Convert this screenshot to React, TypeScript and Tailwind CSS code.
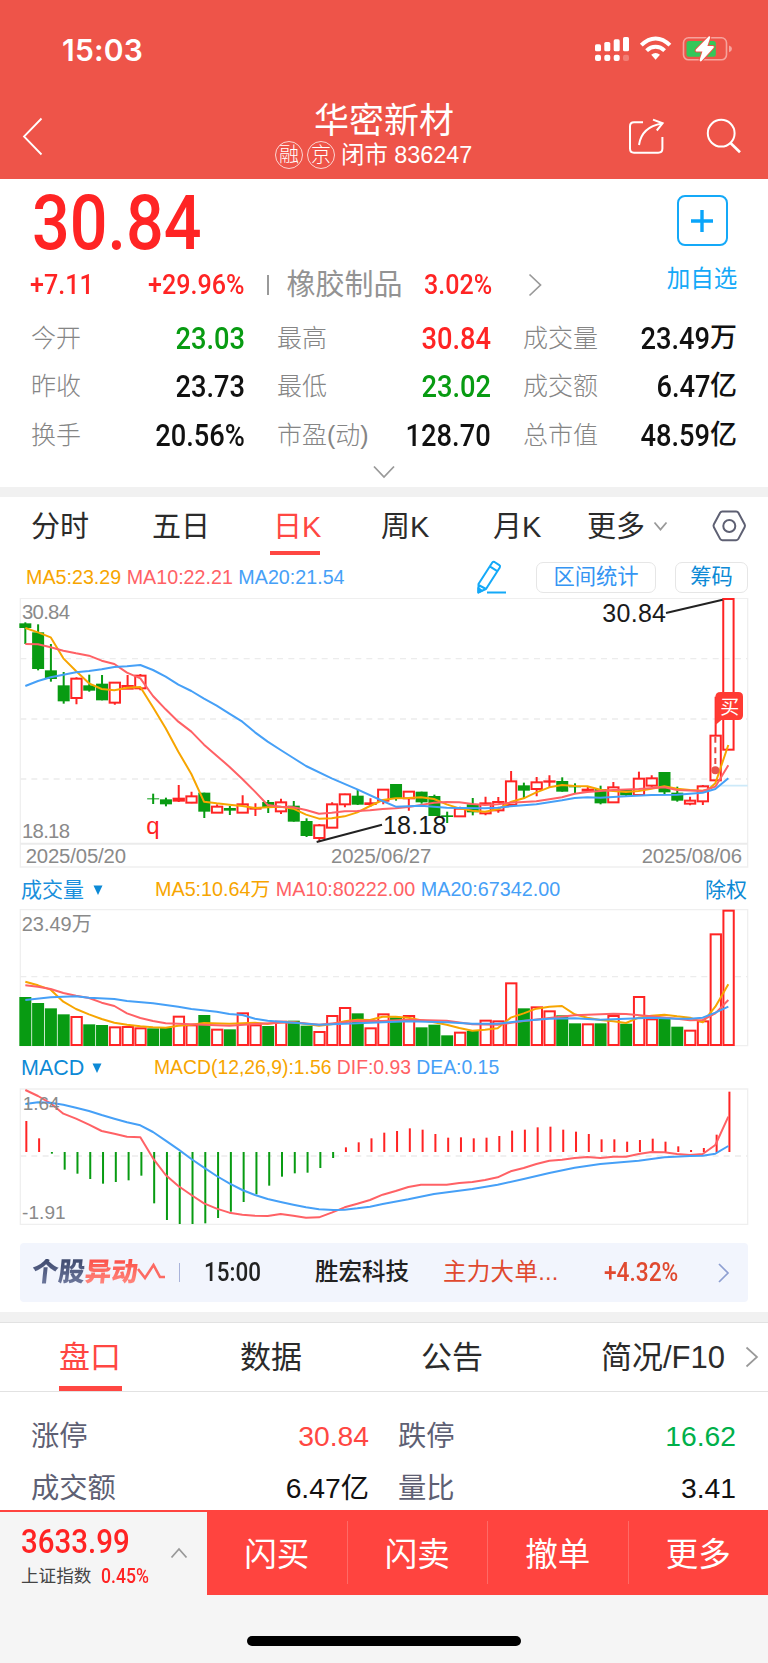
import React from "react";
import clsx from "clsx";

type Candle = [dir: "u" | "d", high: number, low: number, top: number, bottom: number];
type Bar = ["u" | "d", number];

const RED = "#ff2424";
const GREEN = "#089b12";
const ORANGE = "#f7a500";
const PINK = "#ff6165";
const BLUE = "#46a0f7";

// Chart units are thirds of a pixel, one trading day every STEP units.
const STEP = 38.35;
const dayX = (i: number) => 76 + i * STEP;

const candles: Candle[] = [
  ["d", 97, 162, 100, 114], ["d", 103, 241, 127, 237], ["d", 162, 275, 241, 267], ["d", 246, 341, 286, 334],
  ["u", 262, 343, 266, 324], ["d", 254, 305, 286, 302], ["d", 255, 331, 281, 331], ["u", 277, 344, 278, 338],
  ["u", 255, 297, 288, 296], ["u", 252, 301, 257, 295], ["d", 611, 642, 625, 628], ["d", 623, 649, 628, 643],
  ["u", 585, 636, 626, 632], ["u", 605, 640, 619, 638], ["d", 608, 684, 608, 665], ["u", 643, 668, 650, 668],
  ["d", 648, 675, 654, 662], ["u", 616, 669, 643, 668], ["u", 640, 678, 655, 656], ["d", 630, 669, 636, 654],
  ["u", 626, 672, 637, 664], ["d", 633, 695, 647, 695], ["d", 685, 741, 693, 738], ["u", 702, 756, 706, 744],
  ["u", 637, 714, 643, 713], ["u", 611, 652, 613, 643], ["d", 598, 645, 617, 644], ["u", 625, 650, 640, 642],
  ["u", 597, 643, 599, 632], ["d", 582, 632, 582, 627], ["u", 603, 662, 605, 625], ["d", 605, 641, 605, 637],
  ["d", 614, 678, 618, 678], ["d", 665, 699, 676, 681], ["u", 650, 681, 656, 679], ["d", 624, 676, 643, 667],
  ["u", 620, 676, 640, 670], ["u", 621, 668, 636, 661], ["u", 543, 645, 574, 645], ["d", 578, 625, 586, 602],
  ["u", 561, 619, 577, 597], ["u", 556, 592, 574, 575], ["d", 562, 605, 573, 605], ["d", 580, 610, 589, 592],
  ["u", 590, 604, 599, 602], ["d", 587, 643, 597, 640], ["u", 576, 638, 592, 637], ["d", 597, 618, 600, 616],
  ["u", 545, 615, 566, 615], ["u", 556, 590, 565, 587], ["d", 546, 612, 546, 607], ["d", 590, 635, 608, 632],
  ["u", 620, 646, 632, 641], ["u", 585, 645, 589, 634], ["u", 320, 572, 437, 571], ["u", 27, 480, 27, 479],
];

const priceMa5 =
  "76,114 114,127 152,142 190,205 228,243 267,280 305,297 343,301 381,293 421,291 459,352 497,415 535,485 574,552 612,635 650,640 688,644 727,648 765,654 803,652 842,650 880,656 918,674 957,686 995,685 1034,679 1072,667 1110,648 1148,630 1187,625 1225,624 1263,622 1302,627 1340,643 1378,655 1417,662 1455,665 1493,658 1532,636 1571,625 1609,607 1648,592 1686,585 1724,588 1762,589 1801,599 1840,603 1878,606 1916,603 1954,596 1993,589 2031,596 2070,600 2108,602 2124,599 2146,580 2185,465";
const priceMa10 =
  "76,162 114,163 152,172 190,182 228,190 267,197 305,212 343,222 381,248 421,265 459,318 497,358 535,395 574,425 612,464 650,497 688,530 727,567 765,605 803,645 842,650 880,652 918,660 957,671 995,668 1034,664 1072,663 1110,661 1148,657 1187,655 1225,651 1263,645 1302,638 1340,636 1378,637 1417,642 1455,645 1493,643 1532,638 1609,634 1648,628 1686,622 1724,611 1762,606 1840,600 1916,597 1993,592 2031,600 2108,603 2146,590 2185,526";
const priceMa20 =
  "76,288 114,273 152,262 190,254 228,247 267,243 305,238 343,231 381,229 421,225 459,240 497,260 535,284 574,303 612,326 650,347 688,371 727,395 765,427 803,455 842,480 880,504 918,528 995,565 1072,598 1148,633 1187,650 1263,647 1340,653 1378,654 1455,655 1493,653 1532,649 1609,643 1686,631 1724,624 1762,622 1801,623 1878,619 1954,615 2031,614 2108,608 2146,597 2185,565";

const volumes: Bar[] = [
  ["d", 381], ["d", 399], ["d", 415], ["d", 433], ["u", 441], ["d", 463], ["d", 465], ["u", 472],
  ["u", 471], ["u", 475], ["d", 475], ["d", 473], ["u", 440], ["u", 466], ["d", 435], ["u", 479],
  ["d", 478], ["u", 430], ["u", 466], ["d", 468], ["u", 455], ["d", 452], ["d", 467], ["u", 486],
  ["u", 438], ["u", 414], ["d", 430], ["u", 475], ["u", 433], ["d", 442], ["u", 438], ["d", 472],
  ["d", 464], ["d", 496], ["u", 488], ["d", 483], ["u", 452], ["u", 454], ["u", 340], ["d", 415],
  ["u", 412], ["u", 424], ["d", 436], ["d", 460], ["u", 463], ["d", 460], ["u", 438], ["d", 461],
  ["u", 381], ["u", 448], ["d", 447], ["d", 470], ["u", 482], ["u", 454], ["u", 193], ["u", 122],
];

const volMa5 =
  "76,335 114,346 152,359 190,395 228,417 267,433 305,447 343,458 381,464 421,469 459,472 497,473 535,467 574,464 612,459 688,461 765,458 803,462 842,456 880,457 957,467 995,463 1034,454 1072,449 1110,450 1148,440 1187,440 1225,443 1263,451 1302,457 1340,464 1378,474 1417,482 1455,479 1493,475 1532,443 1571,430 1609,416 1648,410 1686,408 1724,433 1762,443 1801,450 1840,454 1878,459 1916,443 1954,437 1993,434 2031,439 2070,443 2108,457 2146,410 2185,343";
const volMa10 =
  "76,346 114,350 152,357 190,369 228,377 267,384 305,398 343,408 381,430 421,444 459,453 497,460 535,461 612,464 688,467 765,462 842,458 880,457 957,464 1034,457 1072,452 1148,453 1225,449 1340,452 1417,463 1493,464 1571,453 1648,444 1724,436 1801,433 1840,431 1878,432 1954,439 2031,446 2070,451 2108,450 2146,430 2185,390";
const volMa20 =
  "76,390 152,382 228,379 267,383 343,387 381,393 459,400 535,410 574,417 650,425 688,432 727,435 765,446 803,452 880,458 957,464 1034,461 1110,458 1225,454 1340,457 1417,461 1493,461 1571,452 1648,446 1724,445 1801,449 1878,446 1954,443 2031,446 2070,446 2108,443 2146,428 2185,410";

const macd = [
  753, 805, 851, 899, 911, 927, 941, 936, 931, 917, 1000, 1050, 1062, 1062, 1060, 1044, 1025, 996, 973,
  947, 920, 910, 908, 894, 864, 832, 817, 805, 788, 783, 775, 779, 792, 803, 802, 805, 803, 798, 782,
  779, 772, 770, 779, 785, 792, 808, 808, 815, 810, 806, 815, 829, 840, 834, 794, 665,
];
const MACD_ZERO = 846;

const dif =
  "76,660 114,678 152,700 190,731 228,746 267,764 305,783 343,791 381,800 421,802 459,865 497,915 535,948 574,975 612,1000 650,1016 688,1028 727,1034 765,1037 803,1038 842,1032 880,1037 918,1043 957,1042 995,1028 1034,1012 1072,1001 1110,990 1148,974 1187,963 1225,951 1263,944 1340,944 1378,939 1417,936 1455,930 1493,922 1532,904 1571,894 1609,882 1648,872 1686,869 1724,864 1762,861 1801,864 1840,860 1878,860 1916,852 1954,846 1993,847 2031,852 2070,855 2108,852 2146,825 2185,740";
const dea =
  "76,702 114,697 152,698 190,704 228,713 267,723 305,735 343,746 381,757 421,766 459,786 497,812 535,838 574,867 612,893 650,918 688,940 727,960 765,975 803,987 842,996 880,1004 918,1012 957,1018 1000,1020 1034,1019 1072,1015 1110,1010 1148,1002 1225,988 1302,972 1417,957 1493,944 1571,927 1648,909 1724,893 1801,882 1916,872 1993,862 2070,858 2108,857 2146,851 2185,828";

const stats = [
  [
    { label: "今开", value: "23.03", color: "text-[#089b12]" },
    { label: "最高", value: "30.84", color: "text-[#ff2424]" },
    { label: "成交量", value: "23.49", unit: "万", color: "text-[#111]" },
  ],
  [
    { label: "昨收", value: "23.73", color: "text-[#111]" },
    { label: "最低", value: "23.02", color: "text-[#089b12]" },
    { label: "成交额", value: "6.47", unit: "亿", color: "text-[#111]" },
  ],
  [
    { label: "换手", value: "20.56%", color: "text-[#111]" },
    { label: "市盈(动)", value: "128.70", color: "text-[#111]" },
    { label: "总市值", value: "48.59", unit: "亿", color: "text-[#111]" },
  ],
];

// Condensed figures used for quotes
const Num = ({ children, className }: { children: React.ReactNode; className?: string }) => (
  <span
    className={clsx(
      "inline-block whitespace-nowrap scale-x-[0.88] font-['Roboto','Noto_Sans_CJK_SC',sans-serif] font-medium",
      className
    )}
  >
    {children}
  </span>
);

const Line = ({ points, color }: { points: string; color: string }) => (
  <polyline points={points} fill="none" stroke={color} strokeWidth="6" strokeLinejoin="round" />
);

const Dash = ({ y }: { y: number }) => (
  <line x1="61" x2="2243" y1={y} y2={y} stroke="#ececec" strokeWidth="4" strokeDasharray="18 15 18 16" />
);

const chartFont = "Liberation Sans, Noto Sans CJK SC, sans-serif";

const StatusBar = () => (
  <div className="flex h-[98px] items-center pl-[62px] pr-[36px]">
    <span className="mt-[2px] font-['Inter',sans-serif] text-[30px] font-semibold leading-none tracking-[0.2px]">15:03</span>
    <svg className="ml-auto" width="139" height="28" viewBox="593 35 139 28">
      <g fill="#fff">
        <rect x="595" y="44.3" width="6" height="7" rx="1.6" />
        <rect x="604.3" y="42" width="6" height="9.3" rx="1.6" />
        <rect x="613.7" y="39.3" width="6" height="12" rx="1.6" />
        <rect x="623" y="37" width="6" height="14.3" rx="1.6" />
        <rect x="595" y="54.7" width="6" height="6.3" rx="2" />
        <rect x="604.3" y="54.7" width="6" height="6.3" rx="2" />
        <rect x="613.7" y="54.7" width="6" height="6.3" rx="2" />
        <rect x="623" y="54.7" width="6" height="6.3" rx="2" opacity=".25" />
        <path d="M651.2 54.8Q655.6 51.3 660 54.8L655.6 59.8Z" />
      </g>
      <g fill="none" stroke="#fff" strokeWidth="4">
        <path d="M641.3 45.2Q648 38.4 655.6 38.4Q663.2 38.4 669.9 45.2" />
        <path d="M646.6 50.6Q650.6 46.7 655.6 46.7Q660.6 46.7 664.6 50.6" />
      </g>
      <rect x="683.5" y="37.8" width="43" height="22" rx="5" fill="none" stroke="#f6a39d" strokeWidth="1.6" />
      <path d="M729 45.5Q732 46.5 732 48.8Q732 51.2 729 52.2Z" fill="#f6a39d" />
      <rect x="686.5" y="41" width="29.3" height="15.8" rx="2.5" fill="#33c759" />
      <path
        d="M708.6 36.6L696 49.6Q695 51.6 697 51.6H702.4L699.6 60Q699.8 62.2 701.6 61L713.4 48Q714.6 46 712.6 46H707.4L710.2 37.6Q710.2 35.6 708.6 36.6Z"
        fill="#fff"
        stroke="#ee5449"
        strokeWidth="2"
        paintOrder="stroke"
      />
    </svg>
  </div>
);

const Header = () => (
  <header className="h-[179px] bg-[#ee5449] text-white">
    <StatusBar />
    <div className="flex h-[80px]">
      <svg className="ml-[22px] mt-[19px]" width="22" height="39" fill="none" stroke="#fff" strokeWidth="1.8">
        <path d="M19.5 1.5L2 19.5L19.5 37.5" />
      </svg>
      <div className="ml-[231px] w-[218px]">
        <h1 className="ml-[39px] mt-[4px] text-[35px] font-normal leading-[38px]">华密新材</h1>
        <div className="mt-[1px] flex items-center whitespace-nowrap text-[23.4px] leading-[28px]">
          <span className="flex h-[28px] w-[28px] items-center justify-center rounded-full border border-white/75 text-[20px] font-light leading-none">
            融
          </span>
          <span className="ml-[4px] flex h-[28px] w-[28px] items-center justify-center rounded-full border border-white/75 text-[20px] font-light leading-none">
            京
          </span>
          <span className="ml-[6px]">闭市 836247</span>
        </div>
      </div>
      <svg className="ml-[135px] mt-[18px]" width="115" height="42" viewBox="628 116 115 42" fill="none" stroke="#fff" strokeWidth="2">
        <path d="M643 122.3H634Q630 122.3 630 126.3V148.5Q630 152.7 634 152.7H658.2Q662.4 152.7 662.4 148.5V137" />
        <path d="M639 145Q641.5 127 662 123.5M653 119.6L662.6 123.3L656.8 130.5" />
        <circle cx="721.2" cy="133.2" r="13.4" />
        <path d="M730.5 143L740 152.3" strokeWidth="2.6" />
      </svg>
    </div>
  </header>
);

const Quote = () => (
  <section className="h-[308px] pt-[16px]">
    <div className="flex h-[121px] text-[#ff2424]">
      <div className="w-[620px]">
        <Num className="ml-[32px] block h-[73px] w-[200px] origin-left text-[75.5px] leading-[57px]">30.84</Num>
        <div className="flex h-[34px] items-center text-[28.5px] leading-none">
          <div className="ml-[30px] w-[118px]">
            <Num className="origin-left">+7.11</Num>
          </div>
          <div className="w-[119px]">
            <Num className="origin-left">+29.96%</Num>
          </div>
          <div className="h-[20px] w-[1.5px] bg-[#999]" />
          <div className="ml-[18px] w-[137px] whitespace-nowrap text-[29px] text-[#939393]">橡胶制品</div>
          <Num className="origin-left">3.02%</Num>
          <svg className="ml-[27px]" width="15" height="24" fill="none" stroke="#999" strokeWidth="1.7">
            <path d="M1.5 1.5L12.5 12L1.5 22.5" />
          </svg>
        </div>
      </div>
      <div className="ml-[45px] w-[74px] text-center text-[#14a9f8]">
        <div className="mx-auto flex h-[51px] w-[51px] items-center justify-center rounded-[8px] border-2 border-[#14a9f8]">
          <svg width="22" height="22" stroke="#0aa5fa" strokeWidth="3.4">
            <path d="M11 0V22M0 11H22" />
          </svg>
        </div>
        <div className="mt-[21px] text-[23.5px] leading-[24px]">加自选</div>
      </div>
    </div>
    <div className="-mt-[2px] pl-[31px]">
      {stats.map((row) => (
        <div key={row[0].label} className="flex h-[48.5px] gap-[32px]">
          {row.map((s) => (
            <div key={s.label} className="flex w-[214px] items-center justify-between whitespace-nowrap leading-none">
              <span className="text-[25px] font-light text-[#858585]">{s.label}</span>
              <div className={clsx("flex items-center", s.color)}>
                <Num className="origin-right text-[31px]">{s.value}</Num>
                {s.unit && <span className="text-[27px] font-medium">{s.unit}</span>}
              </div>
            </div>
          ))}
        </div>
      ))}
    </div>
    <svg className="mx-auto mt-[5px]" width="24" height="15" fill="none" stroke="#999" strokeWidth="1.8">
      <path d="M2 1.5L12 12L22 1.5" />
    </svg>
  </section>
);

const periods = [
  { name: "分时", cell: "w-[121px]" },
  { name: "五日", cell: "w-[121px]" },
  { name: "日K", cell: "w-[108px]" },
  { name: "周K", cell: "w-[112px]" },
  { name: "月K", cell: "w-[94px]" },
  { name: "更多", cell: "w-[66px]" },
];

const PeriodTabs = () => (
  <nav className="flex h-[60px] items-start pl-[31px] text-[29px] text-[#2b2b2b]">
    {periods.map(({ name, cell }) => (
      <div key={name} className={clsx("whitespace-nowrap pt-[13px] leading-[34px]", cell, name === "日K" && "text-[#ff4742]")}>
        {name}
        {name === "日K" && <div className="-ml-[3px] mt-[6.5px] h-[4.5px] w-[50px] bg-[#ff4742]" />}
      </div>
    ))}
    <svg className="mt-[24px]" width="15" height="11" fill="none" stroke="#999" strokeWidth="1.8">
      <path d="M1.5 1.5L7.5 8.5L13.5 1.5" />
    </svg>
    <svg className="ml-[43px] mt-[12px]" width="36" height="34" viewBox="711 509 36 34" fill="none" stroke="#5e6073" strokeWidth="2">
      <path d="M722.3 511.5H736.2Q737.7 511.5 738.4 512.8L744.6 524.3Q745.4 525.8 744.6 527.3L738.4 538.9Q737.7 540.2 736.2 540.2H722.3Q720.8 540.2 720.1 538.9L713.9 527.3Q713.1 525.8 713.9 524.3L720.1 512.8Q720.8 511.5 722.3 511.5Z" />
      <circle cx="729.3" cy="526" r="6" />
    </svg>
  </nav>
);

const PriceChart = () => (
  <>
    <div className="flex h-[41px] items-center pl-[26px] text-[19.7px]">
      <div className="w-[450px] whitespace-nowrap pt-px">
        <span className="text-[#f7a500]">MA5:23.29</span> <span className="text-[#ff6165]">MA10:22.21</span>{" "}
        <span className="text-[#46a0f7]">MA20:21.54</span>
      </div>
      <svg width="32" height="36" viewBox="476 559 32 36" fill="none" stroke="#14a9f8" strokeWidth="2" strokeLinejoin="round">
        <path d="M478.5 583L492.3 561.5Q493.2 560.3 494.5 561L499.3 564.2Q500.6 565.1 499.8 566.4L486 588L478.5 591.3ZM489.8 565.3L497.6 570.3M478.5 584L486 588M487 591.5H506" />
        <path d="M478.3 587L482 589.7L478.3 591.6Z" fill="#14a9f8" />
      </svg>
      <div className="ml-[28px] flex h-[31px] w-[120px] items-center justify-center rounded-[7px] border border-[#e6e6e6] text-[21.3px] leading-none text-[#3595f3]">
        区间统计
      </div>
      <div className="ml-[19px] flex h-[31px] w-[73px] items-center justify-center rounded-[7px] border border-[#e6e6e6] text-[21.3px] leading-none text-[#0d8ad6]">
        筹码
      </div>
    </div>
    <svg className="block" width="768" height="271" viewBox="0 24 2304 813" fontFamily={chartFont}>
      <g fill="none" stroke="#efefef" strokeWidth="4">
        <path d="M61 25H2243V831H61Z" />
        <path d="M61 761H2243" stroke="#ebebeb" strokeWidth="6" />
      </g>
      <Dash y={206} />
      <Dash y={387} />
      <Dash y={567} />
      <path d="M2100 587H2243" stroke="#cdeaf9" strokeWidth="5" />
      <g fontSize="61" fill="#8a8a8a">
        <text x="66" y="88" textLength="144">30.84</text>
        <text x="66" y="743" textLength="144">18.18</text>
        <text x="77" y="820" textLength="301">2025/05/20</text>
        <text x="993" y="820" textLength="301">2025/06/27</text>
        <text x="1925" y="820" textLength="301">2025/08/06</text>
      </g>
      {candles.map(([dir, high, low, top, bottom], i) => {
        const x = dayX(i);
        if (dir === "d")
          return (
            <g key={i} fill={GREEN}>
              <rect x={x - 3} y={high} width="6" height={low - high} />
              <rect x={x - 18} y={top} width="36" height={bottom - top} />
            </g>
          );
        return (
          <g key={i} fill="none" stroke={RED} strokeWidth="6">
            <path d={`M${x} ${high}V${top}M${x} ${bottom}V${low}`} />
            <rect x={x - 15.5} y={top} width="31" height={bottom - top} />
          </g>
        );
      })}
      <Line points={priceMa5} color={ORANGE} />
      <Line points={priceMa10} color={PINK} />
      <Line points={priceMa20} color={BLUE} />
      <path d="M950 756L1146 704M1998 69L2168 29" stroke="#222" strokeWidth="6" />
      <g fontSize="75" fill="#1a1a1a">
        <text x="1149" y="733" textLength="190">18.18</text>
        <text x="1807" y="97" textLength="191">30.84</text>
      </g>
      <text x="439" y="732" fontSize="72" fill={RED}>q</text>
      <path d="M2146 440V540" stroke="#e8453f" strokeWidth="6" strokeDasharray="18 14" />
      <circle cx="2146" cy="541" r="12" fill="#e8534c" />
      <path d="M2146 322Q2146 306 2162 306H2215Q2229 306 2229 320V376Q2229 390 2215 390H2164L2146 406Z" fill="#ff3b33" />
      <text x="2161" y="371" fontSize="57" fill="#fff">买</text>
    </svg>
  </>
);

const VolumeChart = () => (
  <>
    <div className="flex h-[40px] items-center pl-[21px] pt-px text-[19.75px]">
      <span className="w-[72px] text-[21px] text-[#1a8fdc]">成交量</span>
      <svg width="10" height="10" fill="#0d8ad6">
        <path d="M0.5 0.5H9.5L5 10Z" />
      </svg>
      <div className="ml-[52px] w-[550px] whitespace-nowrap">
        <span className="text-[#f7a500]">MA5:10.64万</span> <span className="text-[#ff6165]">MA10:80222.00</span>{" "}
        <span className="text-[#46a0f7]">MA20:67342.00</span>
      </div>
      <span className="text-[21px] text-[#0d8ad6]">除权</span>
    </div>
    <svg className="block" width="768" height="138" viewBox="0 117 2304 414" fontFamily={chartFont}>
      <path d="M61 119H2243V527H61Z" fill="none" stroke="#efefef" strokeWidth="4" />
      <Dash y={320} />
      <text x="65" y="184" fontSize="60" fill="#8a8a8a">23.49万</text>
      {volumes.map(([dir, top], i) =>
        dir === "d" ? (
          <rect key={i} x={dayX(i) - 18} y={top} width="36" height={528 - top} fill={GREEN} />
        ) : (
          <rect key={i} x={dayX(i) - 15} y={top} width="31" height={525 - top} fill="#fff" stroke={RED} strokeWidth="6" />
        )
      )}
      <Line points={volMa5} color={ORANGE} />
      <Line points={volMa10} color={PINK} />
      <Line points={volMa20} color={BLUE} />
    </svg>
  </>
);

const MacdChart = () => (
  <>
    <div className="flex h-[41px] items-center pl-[21px] pt-px text-[19.35px]">
      <span className="w-[71px] text-[21.5px] text-[#0d8ad6]">MACD</span>
      <svg width="10" height="10" fill="#0d8ad6">
        <path d="M0.5 0.5H9.5L5 10Z" />
      </svg>
      <div className="ml-[52px] whitespace-nowrap">
        <span className="text-[#f7a500]">MACD(12,26,9):1.56</span> <span className="text-[#ff6165]">DIF:0.93</span>{" "}
        <span className="text-[#46a0f7]">DEA:0.15</span>
      </div>
    </div>
    <svg className="block" width="768" height="137" viewBox="0 654 2304 411" fontFamily={chartFont}>
      <path d="M61 657H2243V1063H61Z" fill="none" stroke="#efefef" strokeWidth="4" />
      <Dash y={858} />
      {macd.map((v, i) => (
        <rect
          key={i}
          x={dayX(i)}
          y={Math.min(v, MACD_ZERO)}
          width="6"
          height={Math.abs(v - MACD_ZERO)}
          fill={v < MACD_ZERO ? RED : GREEN}
        />
      ))}
      <Line points={dif} color={PINK} />
      <Line points={dea} color={BLUE} />
      <g fontSize="57" fill="#8a8a8a">
        <text x="68" y="720">1.64</text>
        <text x="66" y="1048" textLength="131">-1.91</text>
      </g>
    </svg>
  </>
);

const Movers = () => (
  <div className="mx-[20px] mt-[18px] flex h-[59px] items-center whitespace-nowrap rounded-[4px] bg-[#f2f5fd] text-[23.5px] leading-none text-[#222]">
    <div className="ml-[12px] flex w-[105px] -skew-x-[6deg] text-[26.5px] font-black">
      <span className="bg-linear-to-b from-[#3f4a6e] to-[#717ba0] bg-clip-text text-transparent">个股</span>
      <span className="bg-linear-to-b from-[#fb4f48] to-[#ff8a82] bg-clip-text text-transparent">异动</span>
    </div>
    <svg width="31" height="26" fill="none" stroke="#fc6a63" strokeWidth="2.6">
      <path d="M1 9L8 18L16.500 5L23 17H28" />
    </svg>
    <div className="ml-[11px] h-[19px] w-px bg-[#a9b3da]" />
    <div className="ml-[24px] w-[111px] pt-px text-[25.5px]">
      <Num className="origin-left">15:00</Num>
    </div>
    <div className="w-[128px] pt-px font-medium">胜宏科技</div>
    <div className="w-[161px] pt-px tracking-[0.3px] text-[#e0492f]">主力大单...</div>
    <div className="w-[114px] pt-px text-[25.8px] text-[#e0492f]">
      <Num className="origin-left">+4.32%</Num>
    </div>
    <svg width="12" height="20" fill="none" stroke="#8e9fd2" strokeWidth="1.7">
      <path d="M1 1L10 10L1 19" />
    </svg>
  </div>
);

const InfoTabs = () => (
  <nav className="flex h-[70px] border-y border-[#e2e2e2] text-[31px] leading-[69px] text-[#2b2b2b]">
    <div className="ml-[59px] flex w-[181px] flex-col text-[#ff4742]">
      <span className="h-[63px]">盘口</span>
      <div className="h-[5px] w-[63px] bg-[#ff4742]" />
    </div>
    <div className="w-[181px]">数据</div>
    <div className="w-[180px]">公告</div>
    <div className="w-[144px] whitespace-nowrap">简况/F10</div>
    <svg className="mt-[23px]" width="14" height="22" fill="none" stroke="#999" strokeWidth="1.7">
      <path d="M1.5 1.5L12 11L1.5 20.5" />
    </svg>
  </nav>
);

const details = [
  ["涨停", "30.84", "text-[#ff4742]", "跌停", "16.62", "text-[#00b04a]"],
  ["成交额", "6.47亿", "text-[#111]", "量比", "3.41", "text-[#111]"],
];

const Details = () => (
  <div className="h-[118px] overflow-hidden pl-[31px] pt-[18px] text-[28.3px]">
    {details.map(([l1, v1, c1, l2, v2, c2]) => (
      <div key={l1} className="flex h-[52px] items-center leading-none text-[#5e6073]">
        <span className="w-[150px]">{l1}</span>
        <span className={clsx("w-[188px] text-right", c1)}>{v1}</span>
        <span className="ml-[29px] w-[150px]">{l2}</span>
        <span className={clsx("w-[188px] text-right", c2)}>{v2}</span>
      </div>
    ))}
  </div>
);

const actions = ["闪买", "闪卖", "撤单", "更多"];

const BottomBar = () => (
  <footer className="h-[153px] bg-[#f5f5f5]">
    <div className="flex h-[85px]">
      <div className="flex w-[207px] border-t-2 border-[#ff443f] pl-[21px]">
        <div className="w-[149px] whitespace-nowrap">
          <Num className="mt-[11px] origin-left text-[33.5px] leading-[38px] text-[#ff2424]">3633.99</Num>
          <div className="mt-[2px] flex text-[17.6px] leading-[26px] text-[#444]">
            <span className="w-[80px]">上证指数</span>
            <Num className="origin-left text-[20px] text-[#ff2424]">0.45%</Num>
          </div>
        </div>
        <svg className="mt-[34px]" width="18" height="13" fill="none" stroke="#999" strokeWidth="1.8">
          <path d="M1.5 11.5L9 3L16.5 11.5" />
        </svg>
      </div>
      <div className="flex flex-1 items-center bg-[#ff443f] text-[32.5px] text-white">
        {actions.map((name, i) => (
          <div
            key={name}
            className={clsx("flex h-[63px] flex-1 items-center justify-center pt-[5px] leading-none", i < 3 && "border-r border-[#ff6a66]")}
          >
            {name}
          </div>
        ))}
      </div>
    </div>
    <div className="mx-auto mt-[41px] h-[10px] w-[274px] rounded-full bg-black" />
  </footer>
);

export default function App() {
  return (
    <div className="h-[1663px] w-[768px] overflow-hidden bg-white font-['Liberation_Sans','Noto_Sans_CJK_SC',sans-serif]">
      <Header />
      <Quote />
      <div className="h-[10px] bg-[#f1f1f1]" />
      <PeriodTabs />
      <PriceChart />
      <VolumeChart />
      <MacdChart />
      <Movers />
      <div className="mt-[10px] h-[10px] bg-[#f1f1f1]" />
      <InfoTabs />
      <Details />
      <BottomBar />
    </div>
  );
}
